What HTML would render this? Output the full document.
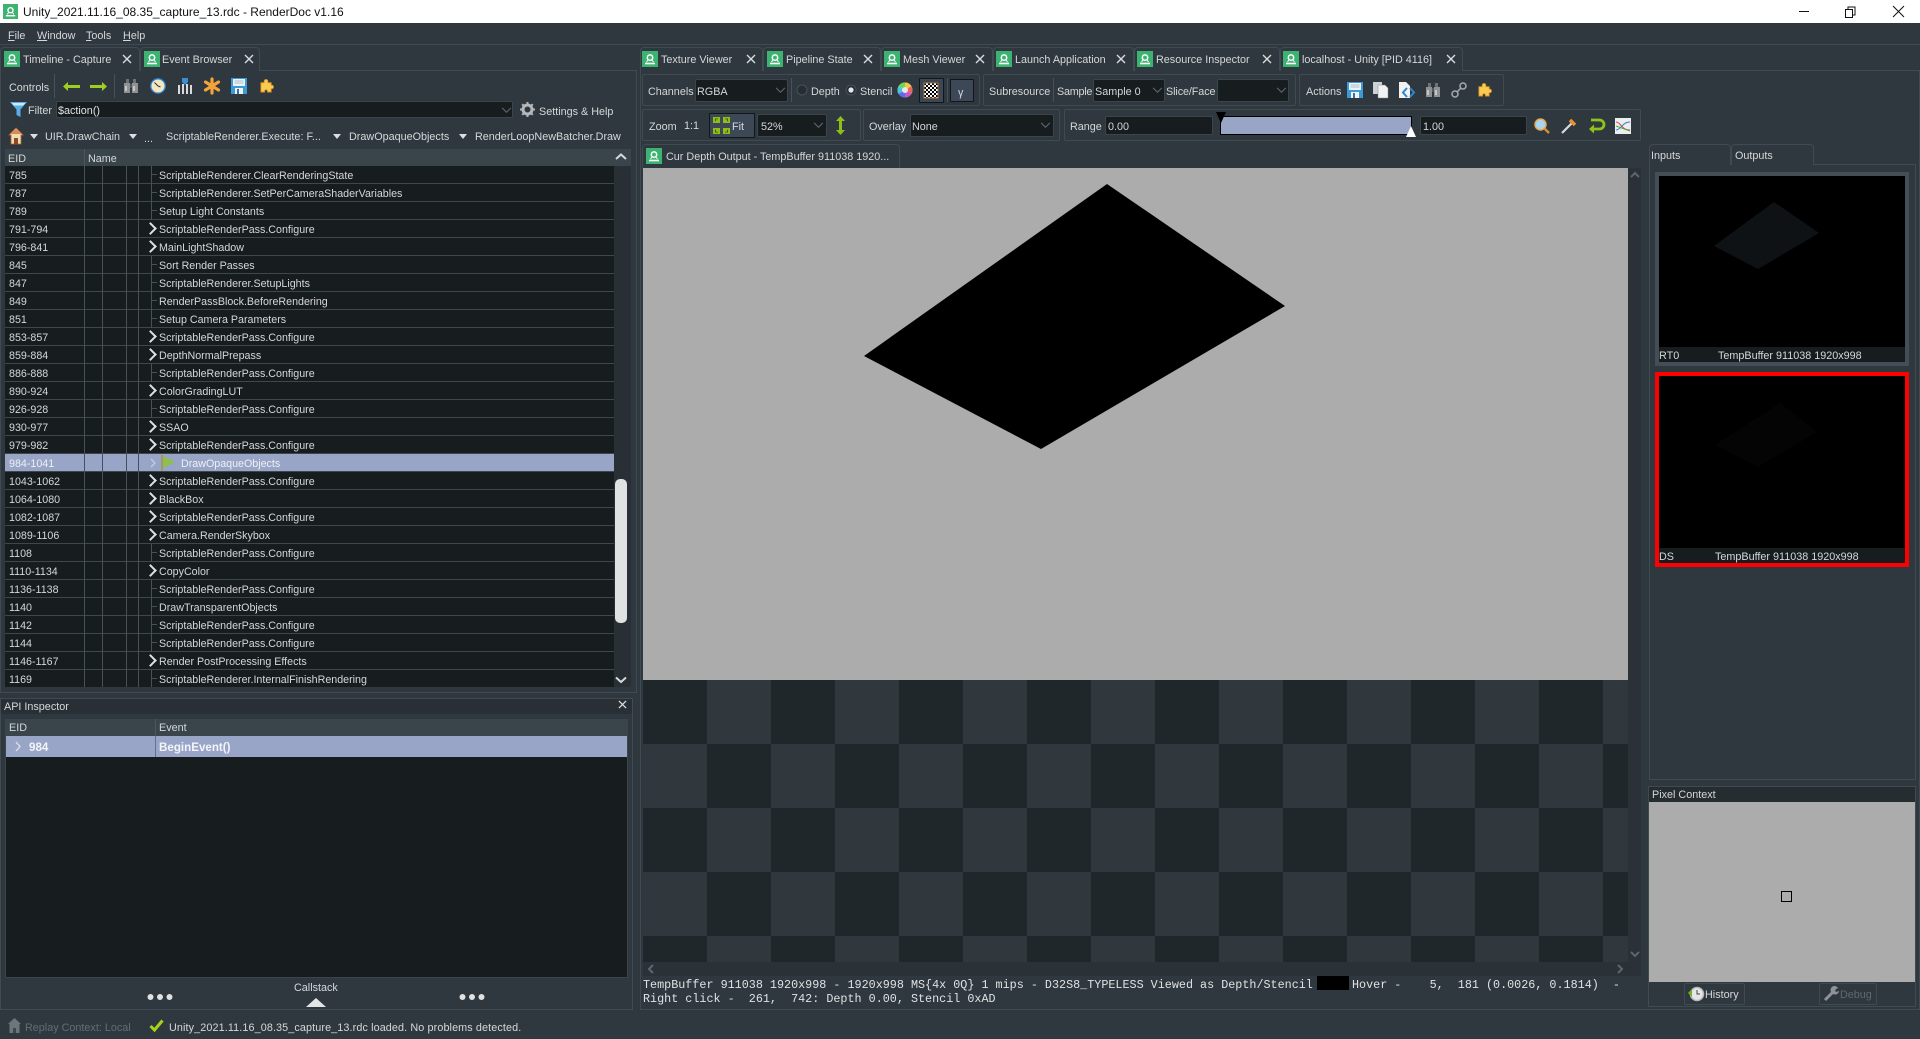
<!DOCTYPE html>
<html><head><meta charset="utf-8"><title>RenderDoc</title>
<style>
*{box-sizing:border-box}
html,body{margin:0;padding:0;width:1920px;height:1039px;overflow:hidden;background:#2f383e;font:10.7px/16px "Liberation Sans",sans-serif;color:#d4d8da}
.a{position:absolute}
.t{position:absolute;white-space:pre;height:16px;line-height:16px;margin-top:1px;font-size:10.8px}
.tab{position:absolute;top:47px;height:24px;background:#2f383e;border:1px solid #3f4a51;border-bottom:0;border-radius:4px 4px 0 0}
.g{position:absolute;border:1px solid #3f4a51;border-radius:2px}
.c{position:absolute;background:#171c1f;border:1px solid #3a454c;border-radius:2px}
.sep{position:absolute;width:1px;background:#465159}
.btn{position:absolute;background:#3c4855;border:1px solid #11161a;border-radius:1px}
svg{position:absolute;overflow:visible}
.rows{position:absolute;left:5px;top:166px;width:609px;height:521px;overflow:hidden;background:#171c1f}
.r{position:relative;height:18px;border-bottom:1px solid #3d474e;line-height:17px;white-space:pre}
.r span{position:absolute;top:2px;line-height:16px}
.e{left:4px}.n{left:154px}
.l:before{content:"";position:absolute;left:146px;top:0;width:1px;height:18px;background:#465159}
.l:after{content:"";position:absolute;left:146px;top:8px;width:6px;height:1px;background:#465159}
.o:before{content:"";position:absolute;left:141px;top:4px;width:7px;height:7px;border:solid #dfe2e3;border-width:2px 2px 0 0;transform:rotate(45deg)}
.v{position:absolute;top:166px;width:1px;height:521px;background:#465159}
</style></head><body>
<svg width="0" height="0" style="position:absolute"><defs>
<symbol id="rd" viewBox="0 0 16 16"><rect width="16" height="16" fill="#3cb371"/><circle cx="8" cy="6.6" r="2.7" fill="none" stroke="#fff" stroke-width="1.5"/><path d="M3 12.5h10" stroke="#fff" stroke-width="1.6"/><path d="M4.5 11l1.5-2M11.5 11l-1.5-2" stroke="#fff" stroke-width="1"/></symbol>
<symbol id="x" viewBox="0 0 10 10"><path d="M1 1l8 8M9 1l-8 8" stroke="#dadcdd" stroke-width="1.4" fill="none"/></symbol>
<symbol id="ch" viewBox="0 0 12 8"><path d="M1 1l5 5 5-5" stroke="#5c666c" stroke-width="1.3" fill="none"/></symbol>
<symbol id="fl" viewBox="0 0 16 16"><path d="M0 0h16v16H0z" fill="#3d9ad9"/><path d="M2 1h12v7H2z" fill="#eef3f6"/><path d="M3.5 3h9M3.5 5h9" stroke="#9ab" stroke-width=".8"/><path d="M4 10h8v6H4z" fill="#eef3f6"/><path d="M6 11h2v5H6z" fill="#3d6f9a"/></symbol>
<symbol id="bi" viewBox="0 0 16 16"><path d="M3 1h3v4H3zM10 1h3v4h-3z" fill="#6f7172"/><path d="M1 5h6v10H1zM9 5h6v10H9z" fill="#8f9192"/><path d="M7 6h2v4H7z" fill="#55585a"/><path d="M2 8h2v5H2zM10 8h2v5h-2z" fill="#c4c6c7"/></symbol>
<symbol id="pz" viewBox="0 0 16 16"><path d="M5.500 4.500V3a2 2 0 0 1 4 0v1.500H13V7h.5a2 2 0 0 1 0 4H13v3.500H9v-1a1.500 1.500 0 0 0-3 0v1H2v-10z" fill="#f8cb52" stroke="#d98a1f" stroke-width=".9"/></symbol>
<symbol id="tri" viewBox="0 0 8 5"><path d="M0 0h8L4 5z" fill="#dcdfe0"/></symbol>
<symbol id="ar" viewBox="0 0 17 9"><path d="M0 4.5L5 0v3h12v3H5v3z" fill="#9ccf1f"/></symbol>
</defs></svg>

<!-- title bar -->
<div class="a" style="left:0;top:0;width:1920px;height:23px;background:#fff"></div>
<svg style="left:3px;top:4px" width="15" height="15"><use href="#rd"/></svg>
<div class="t" style="left:23px;top:4px;color:#111;font-size:12px;margin-top:0">Unity_2021.11.16_08.35_capture_13.rdc - RenderDoc v1.16</div>
<svg style="left:1799px;top:6px" width="115" height="12"><path d="M0 5.5h10" stroke="#111"/><path d="M46.5 3.5h7v8h-7zM49 3V1h7v8h-2" fill="none" stroke="#111"/><path d="M94 0l11 11M105 0L94 11" stroke="#111" fill="none"/></svg>

<!-- menu -->
<div class="t" style="left:8px;top:28px;margin-top:0"><span style="text-decoration:underline">F</span>ile</div>
<div class="t" style="left:37px;top:28px;margin-top:0"><span style="text-decoration:underline">W</span>indow</div>
<div class="t" style="left:86px;top:28px;margin-top:0"><span style="text-decoration:underline">T</span>ools</div>
<div class="t" style="left:123px;top:28px;margin-top:0"><span style="text-decoration:underline">H</span>elp</div>
<div class="a" style="left:0;top:44px;width:1920px;height:1px;background:#3f4a51"></div>

<!-- left panel frames -->
<div class="a" style="left:0;top:70px;width:637px;height:623px;border:1px solid #3f4a51"></div>
<div class="a" style="left:0;top:698px;width:633px;height:312px;border:1px solid #3f4a51"></div>
<div class="a" style="left:1px;top:699px;width:631px;height:15px;background:#283035"></div>
<div class="a" style="left:640px;top:70px;width:1280px;height:940px;border:1px solid #3f4a51"></div>

<!-- left tabs -->
<div class="tab" style="left:0;width:140px"></div>
<svg style="left:4px;top:51px" width="16" height="16"><use href="#rd"/></svg>
<div class="t" style="left:23px;top:51px">Timeline - Capture</div>
<svg style="left:122px;top:54px" width="10" height="10"><use href="#x"/></svg>
<div class="tab" style="left:140px;width:120px;height:24px"></div>
<svg style="left:144px;top:51px" width="16" height="16"><use href="#rd"/></svg>
<div class="t" style="left:162px;top:51px">Event Browser</div>
<svg style="left:244px;top:54px" width="10" height="10"><use href="#x"/></svg>

<!-- controls -->
<div class="t" style="left:9px;top:79px">Controls</div>
<div class="sep" style="left:54px;top:74px;height:24px"></div>
<svg style="left:63px;top:82px" width="17" height="9"><use href="#ar"/></svg>
<svg style="left:90px;top:82px;transform:scaleX(-1)" width="17" height="9"><use href="#ar"/></svg>
<div class="sep" style="left:114px;top:74px;height:24px"></div>
<svg style="left:123px;top:78px" width="16" height="16"><use href="#bi"/></svg>
<svg style="left:150px;top:78px" width="16" height="16"><circle cx="8" cy="8" r="7.2" fill="#f2e6c4" stroke="#2f86cc" stroke-width="1.3"/><path d="M8 8L4.5 4.5M8 8l2.5 1" stroke="#333" stroke-width="1"/></svg>
<svg style="left:177px;top:78px" width="16" height="16"><path d="M1 7h2v9H1zM5 6h2v10H5zM9 6h2v10H9zM13 7h2v9h-2z" fill="#d8dadb"/><path d="M5 0h6v4L8 7 5 4z" fill="#3a8fd6"/></svg>
<svg style="left:204px;top:78px" width="16" height="16"><path d="M8 8L8 1M8 8l6.500-4M8 8l6.500 4M8 8v7M8 8L1.500 12M8 8L1.500 4" stroke="#f2a33a" stroke-width="3.2" stroke-linecap="round" fill="none"/></svg>
<svg style="left:231px;top:78px" width="16" height="16"><use href="#fl"/></svg>
<svg style="left:259px;top:78px" width="15" height="16"><use href="#pz"/></svg>

<!-- filter -->
<svg style="left:10px;top:102px" width="17" height="16"><path d="M0 0h17L10.5 7.5V15l-4-2V7.5z" fill="#58aee8"/><path d="M1.5 1h14L13 3.5H4z" fill="#cfe8f8"/></svg>
<div class="t" style="left:28px;top:102px">Filter</div>
<div class="c" style="left:56px;top:101px;width:457px;height:17px"></div>
<div class="t" style="left:58px;top:102px;color:#dfe2e3">$action()</div>
<svg style="left:501px;top:107px" width="11" height="7"><use href="#ch"/></svg>
<svg style="left:520px;top:102px" width="15" height="15"><circle cx="7.5" cy="7.5" r="4.5" fill="none" stroke="#b5b8ba" stroke-width="3"/><path d="M7.5 0v3M7.5 12v3M0 7.5h3M12 7.5h3M2.2 2.2l2 2M10.8 10.8l2 2M12.8 2.2l-2 2M4.2 10.8l-2 2" stroke="#b5b8ba" stroke-width="2"/></svg>
<div class="t" style="left:539px;top:103px">Settings &amp; Help</div>

<!-- breadcrumbs -->
<svg style="left:9px;top:128px" width="14" height="16"><path d="M7 0L0 7h2v9h10V7h2z" fill="#efdcb8" stroke="#b2642c" stroke-width=".8"/><path d="M5 10h4v6H5z" fill="#8b4d1f"/><path d="M7 1L2 6h10z" fill="#d98a4a"/></svg>
<svg style="left:30px;top:134px" width="8" height="5"><use href="#tri"/></svg>
<div class="t" style="left:45px;top:128px">UIR.DrawChain</div>
<svg style="left:129px;top:134px" width="8" height="5"><use href="#tri"/></svg>
<div class="t" style="left:144px;top:130px">...</div>
<div class="t" style="left:166px;top:128px">ScriptableRenderer.Execute: F...</div>
<svg style="left:333px;top:134px" width="8" height="5"><use href="#tri"/></svg>
<div class="t" style="left:349px;top:128px">DrawOpaqueObjects</div>
<svg style="left:459px;top:134px" width="8" height="5"><use href="#tri"/></svg>
<div class="t" style="left:475px;top:128px">RenderLoopNewBatcher.Draw</div>

<!-- event table -->
<div class="a" style="left:5px;top:149px;width:626px;height:17px;background:#39444b"></div>
<div class="a" style="left:84px;top:149px;width:1px;height:17px;background:#4b565d"></div>
<div class="t" style="left:8px;top:150px">EID</div>
<div class="t" style="left:88px;top:150px">Name</div>
<div class="a" style="left:614px;top:166px;width:17px;height:521px;background:#283035"></div>
<div class="rows">
<div class="r l"><span class="e">785</span><span class="n">ScriptableRenderer.ClearRenderingState</span></div>
<div class="r l"><span class="e">787</span><span class="n">ScriptableRenderer.SetPerCameraShaderVariables</span></div>
<div class="r l"><span class="e">789</span><span class="n">Setup Light Constants</span></div>
<div class="r o"><span class="e">791-794</span><span class="n">ScriptableRenderPass.Configure</span></div>
<div class="r o"><span class="e">796-841</span><span class="n">MainLightShadow</span></div>
<div class="r l"><span class="e">845</span><span class="n">Sort Render Passes</span></div>
<div class="r l"><span class="e">847</span><span class="n">ScriptableRenderer.SetupLights</span></div>
<div class="r l"><span class="e">849</span><span class="n">RenderPassBlock.BeforeRendering</span></div>
<div class="r l"><span class="e">851</span><span class="n">Setup Camera Parameters</span></div>
<div class="r o"><span class="e">853-857</span><span class="n">ScriptableRenderPass.Configure</span></div>
<div class="r o"><span class="e">859-884</span><span class="n">DepthNormalPrepass</span></div>
<div class="r l"><span class="e">886-888</span><span class="n">ScriptableRenderPass.Configure</span></div>
<div class="r o"><span class="e">890-924</span><span class="n">ColorGradingLUT</span></div>
<div class="r l"><span class="e">926-928</span><span class="n">ScriptableRenderPass.Configure</span></div>
<div class="r o"><span class="e">930-977</span><span class="n">SSAO</span></div>
<div class="r o"><span class="e">979-982</span><span class="n">ScriptableRenderPass.Configure</span></div>
<div class="r" style="background:#98a5c7;color:#eef0f4"><span class="e">984-1041</span><span class="n" style="left:176px">DrawOpaqueObjects</span></div>
<div class="r o"><span class="e">1043-1062</span><span class="n">ScriptableRenderPass.Configure</span></div>
<div class="r o"><span class="e">1064-1080</span><span class="n">BlackBox</span></div>
<div class="r o"><span class="e">1082-1087</span><span class="n">ScriptableRenderPass.Configure</span></div>
<div class="r o"><span class="e">1089-1106</span><span class="n">Camera.RenderSkybox</span></div>
<div class="r l"><span class="e">1108</span><span class="n">ScriptableRenderPass.Configure</span></div>
<div class="r o"><span class="e">1110-1134</span><span class="n">CopyColor</span></div>
<div class="r l"><span class="e">1136-1138</span><span class="n">ScriptableRenderPass.Configure</span></div>
<div class="r l"><span class="e">1140</span><span class="n">DrawTransparentObjects</span></div>
<div class="r l"><span class="e">1142</span><span class="n">ScriptableRenderPass.Configure</span></div>
<div class="r l"><span class="e">1144</span><span class="n">ScriptableRenderPass.Configure</span></div>
<div class="r o"><span class="e">1146-1167</span><span class="n">Render PostProcessing Effects</span></div>
<div class="r l"><span class="e">1169</span><span class="n">ScriptableRenderer.InternalFinishRendering</span></div>
</div>
<div class="v" style="left:84px"></div><div class="v" style="left:102px"></div><div class="v" style="left:126px"></div><div class="v" style="left:138px"></div>
<svg style="left:150px;top:458px" width="7" height="10"><path d="M1 1l4 4-4 4" stroke="#c3cbdf" stroke-width="1.4" fill="none"/></svg>
<svg style="left:161px;top:455px" width="15" height="16"><path d="M1 0v16" stroke="#a3905a" stroke-width="1.5"/><path d="M2 1l12 6-12 6z" fill="#8fbe4a"/></svg>
<svg style="left:615px;top:153px" width="12" height="8"><path d="M1 6l5-4.500L11 6" stroke="#d6d9db" stroke-width="2" fill="none"/></svg>
<svg style="left:615px;top:676px" width="12" height="8"><path d="M1 1.500L6 6l5-4.500" stroke="#d6d9db" stroke-width="2" fill="none"/></svg>
<div class="a" style="left:615px;top:479px;width:12px;height:144px;background:#dfe1e2;border-radius:5px"></div>

<!-- API inspector -->
<div class="t" style="left:4px;top:698px">API Inspector</div>
<svg style="left:618px;top:700px" width="9" height="9"><use href="#x"/></svg>
<div class="a" style="left:5px;top:719px;width:623px;height:259px;background:#171c1f;border:1px solid #3a454c"></div>
<div class="a" style="left:6px;top:719px;width:621px;height:17px;background:#39444b"></div>
<div class="a" style="left:155px;top:719px;width:1px;height:38px;background:#4b565d"></div>
<div class="t" style="left:9px;top:720px;margin-top:0">EID</div>
<div class="t" style="left:159px;top:720px;margin-top:0">Event</div>
<div class="a" style="left:6px;top:736px;width:621px;height:21px;background:#98a5c7"></div>
<div class="a" style="left:155px;top:736px;width:1px;height:21px;background:#647090"></div>
<svg style="left:15px;top:741px" width="7" height="11"><path d="M1 1l4 4.500-4 4.500" stroke="#dfe3ed" stroke-width="1.3" fill="none"/></svg>
<div class="t" style="left:29px;top:739px;color:#f4f5f8;font-weight:bold;font-size:11.6px">984</div>
<div class="t" style="left:159px;top:739px;color:#f4f5f8;font-weight:bold;font-size:11.6px">BeginEvent()</div>
<div class="t" style="left:294px;top:979px">Callstack</div>
<svg style="left:147px;top:993px" width="27" height="8"><circle cx="3.5" cy="4" r="3" fill="#dfe1e2"/><circle cx="13" cy="4" r="3" fill="#dfe1e2"/><circle cx="22.5" cy="4" r="3" fill="#dfe1e2"/></svg>
<svg style="left:459px;top:993px" width="27" height="8"><circle cx="3.5" cy="4" r="3" fill="#dfe1e2"/><circle cx="13" cy="4" r="3" fill="#dfe1e2"/><circle cx="22.5" cy="4" r="3" fill="#dfe1e2"/></svg>
<svg style="left:306px;top:998px" width="20" height="9"><path d="M0 9L10 0l10 9z" fill="#e3e5e6"/></svg>

<!-- status bar -->
<svg style="left:8px;top:1018px" width="13" height="15"><path d="M6.5 0L0 6h1.5v9h10V6H13z" fill="#6d767b"/><path d="M5 10h3v5H5z" fill="#3f474c"/></svg>
<div class="t" style="left:25px;top:1019px;color:#646d72">Replay Context: Local</div>
<svg style="left:149px;top:1019px" width="15" height="13"><path d="M1.5 7l4 4L13.5 1.500" stroke="#a6d21c" stroke-width="3" fill="none"/></svg>
<div class="t" style="left:169px;top:1019px;letter-spacing:.11px">Unity_2021.11.16_08.35_capture_13.rdc loaded. No problems detected.</div>

<!-- center tabs -->
<div class="tab" style="left:640px;width:123px"></div>
<svg style="left:642px;top:51px" width="16" height="16"><use href="#rd"/></svg>
<div class="t" style="left:661px;top:51px">Texture Viewer</div>
<svg style="left:746px;top:54px" width="10" height="10"><use href="#x"/></svg>
<div class="tab" style="left:763px;width:118px"></div>
<svg style="left:767px;top:51px" width="16" height="16"><use href="#rd"/></svg>
<div class="t" style="left:786px;top:51px">Pipeline State</div>
<svg style="left:863px;top:54px" width="10" height="10"><use href="#x"/></svg>
<div class="tab" style="left:881px;width:112px"></div>
<svg style="left:884px;top:51px" width="16" height="16"><use href="#rd"/></svg>
<div class="t" style="left:903px;top:51px">Mesh Viewer</div>
<svg style="left:975px;top:54px" width="10" height="10"><use href="#x"/></svg>
<div class="tab" style="left:993px;width:141px"></div>
<svg style="left:996px;top:51px" width="16" height="16"><use href="#rd"/></svg>
<div class="t" style="left:1015px;top:51px">Launch Application</div>
<svg style="left:1116px;top:54px" width="10" height="10"><use href="#x"/></svg>
<div class="tab" style="left:1134px;width:146px"></div>
<svg style="left:1137px;top:51px" width="16" height="16"><use href="#rd"/></svg>
<div class="t" style="left:1156px;top:51px">Resource Inspector</div>
<svg style="left:1262px;top:54px" width="10" height="10"><use href="#x"/></svg>
<div class="tab" style="left:1280px;width:183px"></div>
<svg style="left:1283px;top:51px" width="16" height="16"><use href="#rd"/></svg>
<div class="t" style="left:1302px;top:51px">localhost - Unity [PID 4116]</div>
<svg style="left:1446px;top:54px" width="10" height="10"><use href="#x"/></svg>

<!-- toolbar row 1 -->
<div class="g" style="left:642px;top:74px;width:338px;height:32px"></div>
<div class="t" style="left:648px;top:83px">Channels</div>
<div class="c" style="left:695px;top:79px;width:93px;height:23px"></div>
<div class="t" style="left:697px;top:83px">RGBA</div>
<svg style="left:775px;top:87px" width="11" height="7"><use href="#ch"/></svg>
<div class="sep" style="left:791px;top:78px;height:24px"></div>
<svg style="left:796px;top:84px" width="12" height="12"><circle cx="6" cy="6" r="5" fill="#262e33" stroke="#465159"/></svg>
<div class="t" style="left:811px;top:83px">Depth</div>
<svg style="left:845px;top:84px" width="12" height="12"><circle cx="6" cy="6" r="5" fill="#262e33" stroke="#465159"/><circle cx="6" cy="6" r="2.6" fill="#e6e8e9"/></svg>
<div class="t" style="left:860px;top:83px">Stencil</div>
<svg style="left:897px;top:81px" width="16" height="18" viewBox="0 0 16 16"><circle cx="8" cy="8" r="7.5" fill="#d6d6f0"/><path d="M8 8L8 .5A7.5 7.5 0 0 1 14.500 4.300z" fill="#f2c83c"/><path d="M8 8l6.500-3.700A7.5 7.5 0 0 1 14.500 11.700z" fill="#e9675a"/><path d="M8 8l6.500 3.700A7.5 7.5 0 0 1 8 15.500z" fill="#c956c9"/><path d="M8 8v7.500a7.5 7.5 0 0 1-6.500-3.800z" fill="#5a6ee8"/><path d="M8 8L1.500 11.700a7.5 7.5 0 0 1 0-7.400z" fill="#49c6d8"/><path d="M8 8L1.500 4.300A7.5 7.5 0 0 1 8 .5z" fill="#6fd45a"/><circle cx="8" cy="8" r="3" fill="#e8e8ef"/></svg>
<div class="btn" style="left:919px;top:78px;width:25px;height:25px"></div>
<svg style="left:924px;top:83px" width="14" height="15"><defs><pattern id="cb" width="4" height="4" patternUnits="userSpaceOnUse"><path d="M0 0h4v4H0z" fill="#fff"/><path d="M0 0h2v2H0zM2 2h2v2H2z" fill="#000"/></pattern></defs><rect width="14" height="15" fill="url(#cb)" stroke="#b5783b"/></svg>
<div class="sep" style="left:947px;top:78px;height:24px"></div>
<div class="btn" style="left:950px;top:79px;width:24px;height:23px"></div>
<div class="t" style="left:958px;top:84px">γ</div>

<div class="g" style="left:983px;top:74px;width:313px;height:32px"></div>
<div class="t" style="left:989px;top:83px">Subresource</div>
<div class="sep" style="left:1053px;top:78px;height:24px"></div>
<div class="t" style="left:1057px;top:83px;letter-spacing:-.25px">Sample</div>
<div class="c" style="left:1093px;top:79px;width:72px;height:23px"></div>
<div class="t" style="left:1095px;top:83px">Sample 0</div>
<svg style="left:1152px;top:87px" width="11" height="7"><use href="#ch"/></svg>
<div class="t" style="left:1166px;top:83px;letter-spacing:-.1px">Slice/Face</div>
<div class="c" style="left:1217px;top:79px;width:72px;height:23px"></div>
<svg style="left:1276px;top:87px" width="11" height="7"><use href="#ch"/></svg>

<div class="g" style="left:1299px;top:74px;width:205px;height:32px"></div>
<div class="t" style="left:1306px;top:83px">Actions</div>
<svg style="left:1347px;top:82px" width="16" height="16"><use href="#fl"/></svg>
<svg style="left:1373px;top:82px" width="16" height="16"><path d="M0 0h9v12H0z" fill="#cfd2d4"/><path d="M5 3h7l3 3v10H5z" fill="#f1f2f3" stroke="#888" stroke-width=".5"/></svg>
<svg style="left:1399px;top:82px" width="16" height="16"><path d="M0 0h7l4 4v12H0z" fill="#f1f2f3"/><path d="M8 6L4 10.5 8 15M11 6l4 4.500L11 15" fill="none" stroke="#2f86cc" stroke-width="2"/></svg>
<svg style="left:1425px;top:82px" width="16" height="16"><use href="#bi"/></svg>
<svg style="left:1451px;top:82px" width="16" height="16"><circle cx="4" cy="12" r="3" fill="none" stroke="#a8abad" stroke-width="1.5"/><circle cx="12" cy="4" r="3" fill="none" stroke="#a8abad" stroke-width="1.5"/><path d="M6 10l4-4" stroke="#a8abad" stroke-width="1.5"/></svg>
<svg style="left:1477px;top:82px" width="15" height="16"><use href="#pz"/></svg>

<!-- toolbar row 2 -->
<div class="g" style="left:642px;top:109px;width:219px;height:32px"></div>
<div class="t" style="left:649px;top:118px">Zoom</div>
<div class="t" style="left:684px;top:117px">1:1</div>
<div class="btn" style="left:709px;top:113px;width:46px;height:25px"></div>
<svg style="left:713px;top:117px" width="17" height="17"><path d="M0 0h7v6H0zM10 0h7v6h-7zM0 11h7v6H0zM10 11h7v6h-7z" fill="#8fbe18"/><path d="M2 1.500h3v.8H3v2H2zM15 1.500h-3v.8h2v2h1zM2 15.500h3v-.8H3v-2H2zM15 15.500h-3v-.8h2v-2h1z" fill="#3e5a10"/></svg>
<div class="t" style="left:732px;top:118px">Fit</div>
<div class="c" style="left:757px;top:114px;width:70px;height:23px"></div>
<div class="t" style="left:761px;top:118px">52%</div>
<svg style="left:813px;top:122px" width="11" height="7"><use href="#ch"/></svg>
<svg style="left:836px;top:116px" width="9" height="19"><path d="M4.500 0L9 5H6v9h3l-4.500 5L0 14h3V5H0z" fill="#8fbe18"/></svg>
<div class="g" style="left:863px;top:109px;width:197px;height:32px"></div>
<div class="t" style="left:869px;top:118px">Overlay</div>
<div class="c" style="left:910px;top:114px;width:144px;height:23px"></div>
<div class="t" style="left:912px;top:118px">None</div>
<svg style="left:1040px;top:122px" width="11" height="7"><use href="#ch"/></svg>
<div class="g" style="left:1064px;top:109px;width:577px;height:32px"></div>
<div class="t" style="left:1070px;top:118px">Range</div>
<div class="c" style="left:1105px;top:116px;width:108px;height:19px"></div>
<div class="t" style="left:1108px;top:118px">0.00</div>
<div class="a" style="left:1220px;top:116px;width:192px;height:19px;background:#98a5c7;border:1px solid #000"></div>
<svg style="left:1216px;top:112px" width="10" height="11"><path d="M0 0h10L5 11z" fill="#000"/></svg>
<svg style="left:1406px;top:126px" width="10" height="11"><path d="M5 0l5 11H0z" fill="#fff"/></svg>
<div class="c" style="left:1420px;top:116px;width:107px;height:19px"></div>
<div class="t" style="left:1423px;top:118px">1.00</div>
<svg style="left:1534px;top:118px" width="16" height="16"><circle cx="6.500" cy="6.500" r="5.500" fill="#a8d4f2" stroke="#e5a94f" stroke-width="1.500"/><path d="M10.500 10.500l4.500 4.500" stroke="#d8902f" stroke-width="2.400"/></svg>
<svg style="left:1561px;top:118px" width="16" height="16"><path d="M1 15L11 5" stroke="#d8dadb" stroke-width="2.200"/><path d="M9 2l5 5" stroke="#e8942f" stroke-width="3.500"/></svg>
<svg style="left:1588px;top:118px" width="16" height="16"><path d="M3 2h8.500a3.200 3.200 0 0 1 0 9H3" stroke="#8fc31a" stroke-width="2.800" fill="none"/><path d="M6 6.500L1 11l5 4.500z" fill="#8fc31a"/></svg>
<svg style="left:1615px;top:118px" width="16" height="16"><path d="M0 0h16v16H0z" fill="#eceded"/><path d="M1 4c5 0 5 8 14 8" stroke="#d9453b" fill="none"/><path d="M1 12c5 0 6-8 14-8" stroke="#3d7fd0" fill="none"/><path d="M1 8l14 5" stroke="#4aa84a" fill="none"/></svg>

<!-- texture tab -->
<div class="a" style="left:642px;top:144px;width:258px;height:25px;background:#2f383e;border:1px solid #3f4a51;border-bottom:0;border-radius:4px 4px 0 0"></div>
<svg style="left:646px;top:148px" width="16" height="16"><use href="#rd"/></svg>
<div class="t" style="left:666px;top:148px">Cur Depth Output - TempBuffer 911038 1920...</div>

<!-- viewport -->
<div class="a" style="left:643px;top:168px;width:985px;height:794px;background-color:#1f272a;background-image:conic-gradient(#30383e 25%,#1f272a 0 50%,#30383e 0 75%,#1f272a 0);background-size:128px 128px"></div>
<div class="a" style="left:643px;top:168px;width:985px;height:512px;background:#acacac"></div>
<svg style="left:0;top:0" width="1920" height="1039"><path d="M1107 184L1285 306 1041 449 864 356z" fill="#000"/></svg>
<div class="a" style="left:1628px;top:168px;width:13px;height:794px;background:#2a3237"></div>
<div class="a" style="left:643px;top:962px;width:998px;height:14px;background:#2a3237"></div>
<svg style="left:1630px;top:171px" width="10" height="7"><path d="M1 6l4-4 4 4" stroke="#5c666c" stroke-width="2" fill="none"/></svg>
<svg style="left:1630px;top:951px" width="10" height="7"><path d="M1 1l4 4 4-4" stroke="#5c666c" stroke-width="2" fill="none"/></svg>
<svg style="left:647px;top:964px" width="7" height="10"><path d="M6 1L2 5l4 4" stroke="#5c666c" stroke-width="2" fill="none"/></svg>
<svg style="left:1617px;top:964px" width="7" height="10"><path d="M1 1l4 4-4 4" stroke="#5c666c" stroke-width="2" fill="none"/></svg>
<div class="t" style="left:643px;top:976px;font:11.75px/16px 'Liberation Mono',monospace;color:#dfe2e3">TempBuffer 911038 1920x998 - 1920x998 MS{4x 0Q} 1 mips - D32S8_TYPELESS Viewed as Depth/Stencil</div>
<div class="a" style="left:1317px;top:976px;width:32px;height:14px;background:#000"></div>
<div class="t" style="left:1352px;top:976px;font:11.75px/16px 'Liberation Mono',monospace;color:#dfe2e3">Hover -    5,  181 (0.0026, 0.1814)  -</div>
<div class="t" style="left:643px;top:991px;margin-top:0;font:11.75px/16px 'Liberation Mono',monospace;color:#dfe2e3">Right click -  261,  742: Depth 0.00, Stencil 0xAD</div>

<!-- right panel -->
<div class="a" style="left:1649px;top:164px;width:267px;height:616px;border:1px solid #3f4a51"></div>
<div class="tab" style="left:1649px;top:144px;width:82px;height:21px;background:#2f383e"></div>
<div class="tab" style="left:1731px;top:144px;width:83px;height:21px"></div>
<div class="t" style="left:1651px;top:147px">Inputs</div>
<div class="t" style="left:1735px;top:147px">Outputs</div>
<div class="a" style="left:1655px;top:172px;width:254px;height:194px;border:4px solid #434e56;background:#000"></div>
<div class="a" style="left:1659px;top:347px;width:246px;height:15px;background:#171c1f"></div>
<svg style="left:0;top:0" width="1920" height="1039"><path d="M1774 202L1819 233 1758 269 1714 246z" fill="#0e1214"/></svg>
<div class="t" style="left:1659px;top:347px">RT0</div>
<div class="t" style="left:1718px;top:347px">TempBuffer 911038 1920x998</div>
<div class="a" style="left:1655px;top:372px;width:254px;height:195px;border:4px solid #f00;background:#000"></div>
<div class="a" style="left:1659px;top:548px;width:246px;height:15px;background:#171c1f"></div>
<svg style="left:0;top:0" width="1920" height="1039"><path d="M1780 403L1817 432 1758 467 1715 445z" fill="#040404"/></svg>
<div class="t" style="left:1659px;top:548px">DS</div>
<div class="t" style="left:1715px;top:548px">TempBuffer 911038 1920x998</div>

<div class="a" style="left:1648px;top:786px;width:268px;height:221px;border:1px solid #3f4a51"></div>
<div class="a" style="left:1649px;top:787px;width:266px;height:15px;background:#262d31"></div>
<div class="t" style="left:1652px;top:786px">Pixel Context</div>
<div class="a" style="left:1649px;top:802px;width:266px;height:180px;background:#acacac"></div>
<div class="a" style="left:1781px;top:891px;width:11px;height:11px;border:1px solid #000;outline:0"></div>
<div class="a" style="left:1684px;top:983px;width:61px;height:22px;background:#2f383e;border:1px solid #3f4a51;border-radius:2px"></div>
<svg style="left:1688px;top:986px" width="16" height="16"><circle cx="9" cy="8" r="6.500" fill="#e6e6e6" stroke="#b5b8ba" stroke-width="1.500"/><path d="M9 4v4h3" stroke="#444" fill="none"/><path d="M0 7l4-4v8z" fill="#6fb520"/></svg>
<div class="t" style="left:1705px;top:986px">History</div>
<div class="a" style="left:1819px;top:983px;width:58px;height:22px;background:#2f383e;border:1px solid #3f4a51;border-radius:2px"></div>
<svg style="left:1824px;top:986px" width="15" height="15"><path d="M1 14l8-8" stroke="#8f9397" stroke-width="3"/><path d="M7 6a4 4 0 0 1 7-4l-3 2 1 2 3-1a4 4 0 0 1-6 3z" fill="#8f9397"/></svg>
<div class="t" style="left:1840px;top:986px;color:#5f686d">Debug</div>
</body></html>
